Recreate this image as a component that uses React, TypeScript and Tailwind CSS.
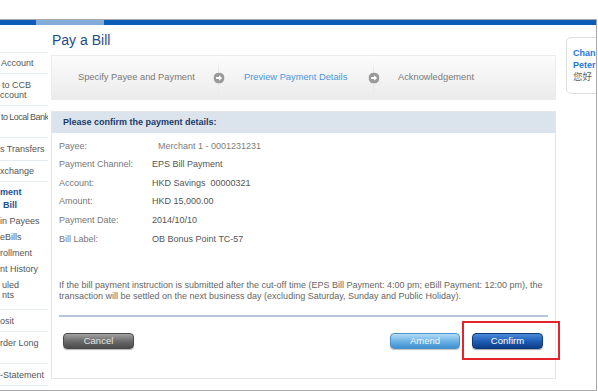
const sep = 'border-b border-[#e6ecf2] flex flex-col justify-center';

function StepArrow() {
  return (
    <div className="relative w-px self-stretch my-[4px] bg-linear-to-b from-transparent via-[#dddddd] to-transparent">
      <svg
        width="11"
        height="11"
        viewBox="0 0 11 11"
        className="absolute left-1/2 top-1/2 -translate-x-1/2 -translate-y-1/2"
      >
        <circle cx="5.5" cy="5.5" r="5.5" fill="#9a9a9a" />
        <path d="M2.6 4.5h3V2.8L8.6 5.5 5.6 8.2V6.5h-3z" fill="#ffffff" />
      </svg>
    </div>
  );
}

function Nav() {
  return (
    <div className="w-[48px] shrink-0 mt-[27px] border-t border-[#e6ecf2] text-[9px] leading-[10px] text-[#555] whitespace-nowrap overflow-hidden">
      <div className={`${sep} h-[21px] pl-[1px]`}>Account</div>
      <div className={`${sep} h-[32px] pl-[2px]`}>
        <span>to CCB</span>
        <span className="-ml-[2px]">ccount</span>
      </div>
      <div className={`${sep} h-[32px] pl-[1px]`}>
        <span className="tracking-[-0.55px]">to Local Bank</span>
        <span>&nbsp;</span>
      </div>
      <div className={`${sep} h-[23px]`}>s Transfers</div>
      <div className={`${sep} h-[21px]`}>xchange</div>
      <div className="border-b border-[#e6ecf2] h-[128px] pt-[5px]">
        <div className="font-bold text-[#1b4f9c]">ment</div>
        <div className="mt-[3px] pl-[3px] font-bold text-[#1b4f9c]">Bill</div>
        <div className="mt-[3px] leading-[16px]">in Payees</div>
        <div className="leading-[16px]">eBills</div>
        <div className="leading-[16px]">rollment</div>
        <div className="leading-[16px]">nt History</div>
        <div className="mt-[3px] pl-[2px]">uled</div>
        <div className="pl-[2px]">nts</div>
      </div>
      <div className={`${sep} h-[22px]`}>osit</div>
      <div className={`${sep} h-[32px]`}>
        <span>rder Long</span>
        <span>&nbsp;</span>
      </div>
      <div className={`${sep} h-[22px]`}>-Statement</div>
    </div>
  );
}

const rows: { label: string; value: string; light?: boolean }[] = [
  { label: 'Payee:', value: 'Merchant 1 - 0001231231', light: true },
  { label: 'Payment Channel:', value: 'EPS Bill Payment' },
  { label: 'Account:', value: 'HKD Savings  00000321' },
  { label: 'Amount:', value: 'HKD 15,000.00' },
  { label: 'Payment Date:', value: '2014/10/10' },
  { label: 'Bill Label:', value: 'OB Bonus Point TC-57' },
];

function Main() {
  return (
    <div className="ml-[3px] w-[505px] shrink-0">
      {/* Title */}
      <div className="h-[30px] flex items-center pl-[1px] text-[14px] text-[#1f4c8a]">Pay a Bill</div>

      {/* Steps */}
      <div className="h-[45px] flex border border-[#ececec] bg-linear-to-b from-[#fcfcfc] to-[#ebebeb] text-[9.3px] text-[#7a7a7a]">
        <div className="w-[166px] pl-[26px] flex items-center">Specify Payee and Payment</div>
        <StepArrow />
        <div className="w-[154px] pl-[25px] flex items-center text-[#4a96df]">Preview Payment Details</div>
        <StepArrow />
        <div className="flex-1 pl-[24px] flex items-center">Acknowledgement</div>
      </div>

      {/* Confirmation panel */}
      <div className="mt-[11px] border border-[#e6e6e6]">
        <div className="h-[21px] bg-[#dbe3ec] flex items-center pl-[11px] text-[9px] font-bold text-[#1c3b6b]">
          Please confirm the payment details:
        </div>

        <div className="pt-[4px] text-[9px]">
          {rows.map((r) => (
            <div key={r.label} className="h-[18.6px] flex items-center pl-[7px]">
              <span className="w-[93px] text-[#777]">{r.label}</span>
              <span className={r.light ? 'ml-[6px] text-[#7c7c7c] whitespace-pre' : 'text-[#555] whitespace-pre'}>
                {r.value}
              </span>
            </div>
          ))}
        </div>

        <p className="mt-[31px] px-[7px] text-[9px] leading-[11px] text-[#666]">
          If the bill payment instruction is submitted after the cut-off time (EPS Bill Payment: 4:00 pm; eBill Payment: 12:00 pm), the
          transaction will be settled on the next business day (excluding Saturday, Sunday and Public Holiday).
        </p>

        <div className="mx-[7px] mt-[13.5px] h-[2px] bg-[#b8c7d7]" />

        <div className="mt-[16px] pb-[29px] flex items-center text-[9.5px]">
          <button className="ml-[11px] w-[71px] h-[16px] rounded-[4px] border border-[#4a4a4a] bg-linear-to-b from-[#a2a2a2] via-[#6c6c6c] to-[#4b4b4b] text-[#e4e4e4] shadow-[0_1px_1px_rgba(0,0,0,0.3)]">
            Cancel
          </button>
          <div className="ml-auto mr-[12px] flex items-center gap-[12px]">
            <button className="w-[70px] h-[16px] rounded-[4px] border border-[#4a94cf] bg-linear-to-b from-[#b3dcf5] via-[#6eb3e6] to-[#3d8fd0] text-[#eef7fd] shadow-[0_1px_1px_rgba(0,0,0,0.25)]">
              Amend
            </button>
            <div className="relative">
              <button className="w-[71px] h-[16px] rounded-[4px] border border-[#0d3a78] bg-linear-to-b from-[#4a8ad8] via-[#1f5fb7] to-[#0e3d88] text-white shadow-[0_1px_1px_rgba(0,0,0,0.35)]">
                Confirm
              </button>
              <div className="absolute -left-[10px] -right-[17px] -top-[12px] -bottom-[11px] border-2 border-[#e5232b]" />
            </div>
          </div>
        </div>
      </div>
    </div>
  );
}

function Card() {
  return (
    <div className="ml-[10px] mt-[12px] h-[57px] w-[60px] shrink-0 rounded-[5px] border border-[#dedede] pl-[6px] pt-[10px] text-[9px] leading-[11.5px] whitespace-nowrap">
      <div className="font-bold text-[#1f78de]">Chan</div>
      <div className="font-bold text-[#1f78de]">Peter</div>
      <div className="text-[#666] text-[9.5px] font-['Noto_Sans_CJK_TC',sans-serif]">您好</div>
    </div>
  );
}

export default function App() {
  return (
    <div className="w-[598px] h-[391px] bg-white overflow-hidden font-['Liberation_Sans',Arial,sans-serif]">
      <div className="mt-[19px] w-[597px] h-[372px] border-t border-r border-b border-[#a9a9a9] overflow-hidden">
        <div className="h-[5px] bg-[#0c5cb9] flex">
          <div className="ml-[36px] w-[68px] bg-[#84acd9]" />
        </div>
        <div className="flex">
          <Nav />
          <Main />
          <Card />
        </div>
      </div>
    </div>
  );
}
